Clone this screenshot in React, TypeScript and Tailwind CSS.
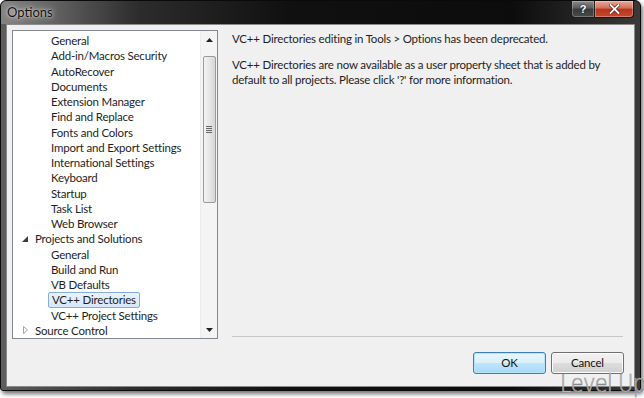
import React from "react";

type Item = { t: string; lvl: 0 | 1; exp?: "open" | "closed"; sel?: boolean };

const items: Item[] = [
  { t: "General", lvl: 1 },
  { t: "Add-in/Macros Security", lvl: 1 },
  { t: "AutoRecover", lvl: 1 },
  { t: "Documents", lvl: 1 },
  { t: "Extension Manager", lvl: 1 },
  { t: "Find and Replace", lvl: 1 },
  { t: "Fonts and Colors", lvl: 1 },
  { t: "Import and Export Settings", lvl: 1 },
  { t: "International Settings", lvl: 1 },
  { t: "Keyboard", lvl: 1 },
  { t: "Startup", lvl: 1 },
  { t: "Task List", lvl: 1 },
  { t: "Web Browser", lvl: 1 },
  { t: "Projects and Solutions", lvl: 0, exp: "open" },
  { t: "General", lvl: 1 },
  { t: "Build and Run", lvl: 1 },
  { t: "VB Defaults", lvl: 1 },
  { t: "VC++ Directories", lvl: 1, sel: true },
  { t: "VC++ Project Settings", lvl: 1 },
  { t: "Source Control", lvl: 0, exp: "closed" },
];

function Row({ it }: { it: Item }) {
  return (
    <div className="h-[15.25px] flex items-center relative whitespace-nowrap">
      {it.lvl === 0 ? (
        <>
          <div className="w-[19px] h-full flex items-center justify-end pr-[4px] shrink-0">
            {it.exp === "open" ? (
              <svg width="6" height="6" viewBox="0 0 6 6">
                <path d="M6 0 L6 6 L0 6 Z" fill="#3c3c3c" />
              </svg>
            ) : (
              <svg width="5" height="8" viewBox="0 0 5 8">
                <path d="M0.5 0.5 L4.5 4 L0.5 7.5 Z" fill="none" stroke="#a6a6a6" strokeWidth="1" />
              </svg>
            )}
          </div>
          <span className="px-[3px] leading-[15px]">{it.t}</span>
        </>
      ) : (
        <>
          <div className="w-[35px] shrink-0" />
          {it.sel ? (
            <span className="px-[3px] h-[16px] flex items-center leading-[15px] rounded-[2px] border border-[#84acdd] bg-[linear-gradient(to_bottom,#eaf3fd,#d6e7fb)]">
              {it.t}
            </span>
          ) : (
            <span className="px-[3px] leading-[15px]">{it.t}</span>
          )}
        </>
      )}
    </div>
  );
}

function ScrollBar() {
  return (
    <div className="w-[17px] h-full bg-[#f4f4f4] border-l border-[#ececec] flex flex-col items-center shrink-0">
      <div className="h-[17px] w-full flex items-center justify-center">
        <svg width="7" height="4" viewBox="0 0 7 4">
          <path d="M0 4 L3.5 0 L7 4 Z" fill="#222" />
        </svg>
      </div>
      <div className="w-[13px] h-[147px] mt-[8px] rounded-[2px] border border-[#9b9b9b] bg-[linear-gradient(to_right,#f3f3f3,#e6e6e6_50%,#d6d6d6)] flex items-center justify-center">
        <div className="flex flex-col gap-[1px]">
          <div className="w-[6px] h-[1px] bg-[#666]" />
          <div className="w-[6px] h-[1px] bg-[#666]" />
          <div className="w-[6px] h-[1px] bg-[#666]" />
          <div className="w-[6px] h-[1px] bg-[#666]" />
        </div>
      </div>
      <div className="flex-1" />
      <div className="h-[17px] w-full flex items-center justify-center">
        <svg width="7" height="4" viewBox="0 0 7 4">
          <path d="M0 0 L7 0 L3.5 4 Z" fill="#222" />
        </svg>
      </div>
    </div>
  );
}

function Btn({ label, focused }: { label: string; focused?: boolean }) {
  return (
    <div
      className={
        "w-[73px] h-[22px] rounded-[3px] border flex items-center justify-center text-[#111] " +
        (focused
          ? "border-[#3c7fb1] bg-[linear-gradient(to_bottom,#eaf6fd_0%,#d9f0fc_50%,#bee6fd_51%,#a7d9f5_100%)] shadow-[inset_0_0_0_1px_#b8e4fa]"
          : "border-[#707070] bg-[linear-gradient(to_bottom,#f2f2f2_0%,#ebebeb_50%,#dddddd_51%,#cfcfcf_100%)] shadow-[inset_0_0_0_1px_#fcfcfc]")
      }
    >
      {label}
    </div>
  );
}

export default function App() {
  return (
    <div className="w-[644px] h-[398px] bg-white relative font-['Lato',sans-serif] text-[11.5px] tracking-[-0.2px] text-[#1e1e1e] overflow-hidden">
      <div className="w-[641px] h-[391px] border border-[#0a0a0a] rounded-t-[6px] rounded-b-[3px] bg-[linear-gradient(to_right,#5e5e5e_0%,#2e2e2e_20%,#101010_45%,#0c0c0c_80%,#3a3a3a_100%)] shadow-[2px_3px_4px_rgba(0,0,0,0.55)] flex flex-col">
        {/* title bar */}
        <div className="h-[23px] flex items-start shrink-0 relative">
          <div className="absolute left-0 top-0 w-[140px] h-[23px] bg-[linear-gradient(to_right,rgba(160,160,160,0.55),rgba(120,120,120,0.25)_60%,rgba(0,0,0,0))] rounded-tl-[6px]" />
          <div className="relative pl-[6px] pt-[4px] text-[13px] tracking-normal leading-[15px] text-[#111] [text-shadow:0_0_6px_rgba(255,255,255,0.9),0_0_2px_rgba(255,255,255,0.7)]">
            Options
          </div>
          <div className="flex-1" />
          <div className="flex mr-[6px] mt-0">
            <div className="w-[24px] h-[17px] rounded-bl-[4px] border border-[#1c1c1c] border-t-0 bg-[linear-gradient(to_bottom,#8a8a8a,#5a5a5a_45%,#3a3a3a_50%,#4a4a4a)] shadow-[inset_0_0_0_1px_rgba(255,255,255,0.25)] flex items-center justify-center text-white text-[11px] font-bold font-['Liberation_Sans',sans-serif] [text-shadow:0_0_2px_#000]">
              ?
            </div>
            <div className="w-[39px] h-[17px] rounded-br-[4px] border border-[#3a0a04] border-t-0 border-l-0 bg-[linear-gradient(to_bottom,#e9a996,#d0705a_45%,#b8341c_50%,#c24a2e)] shadow-[inset_0_0_0_1px_rgba(255,255,255,0.3)] flex items-center justify-center">
              <svg width="11" height="10" viewBox="0 0 11 10">
                <path d="M1.5 1 L9.5 9 M9.5 1 L1.5 9" stroke="#5a1a10" strokeWidth="3.2" strokeLinecap="square" />
                <path d="M1.5 1 L9.5 9 M9.5 1 L1.5 9" stroke="#fff" strokeWidth="1.8" strokeLinecap="square" />
              </svg>
            </div>
          </div>
        </div>
        {/* client */}
        <div className="mx-[5px] mb-[3px] h-[363px] border border-[#8a8a8a] bg-[#f0f0f0] flex flex-col">
          <div className="flex mt-[5px] ml-[5px]">
            <div className="w-[206px] h-[309px] border border-[#828790] bg-white flex">
              <div className="flex-1 pt-[2px] overflow-hidden">
                {items.map((it, i) => (
                  <Row key={i} it={it} />
                ))}
              </div>
              <ScrollBar />
            </div>
            <div className="ml-[14px] w-[391px] h-[309px] flex flex-col whitespace-nowrap">
              <div className="pt-[1px] leading-[15px]">
                VC++ Directories editing in Tools &gt; Options has been deprecated.
              </div>
              <div className="mt-[11px] leading-[15px]">
                VC++ Directories are now available as a user property sheet that is added by
                <br />
                default to all projects. Please click '?' for more information.
              </div>
              <div className="flex-1" />
              <div className="h-[1px] bg-[#c8c8c8] mb-[2px]" />
            </div>
          </div>
          <div className="flex justify-end gap-[5px] mt-[13px] mr-[10px]">
            <Btn label="OK" focused />
            <Btn label="Cancel" />
          </div>
        </div>
      </div>
      <div className="absolute left-[560px] top-[370px] whitespace-nowrap text-[25px] leading-[28px] tracking-[-0.8px] font-['DejaVu_Sans',sans-serif] font-extralight text-[#f4f4f4] [-webkit-text-stroke:0.7px_#8a8a8a] scale-x-[0.84] origin-left">
        Level Up
      </div>
    </div>
  );
}
